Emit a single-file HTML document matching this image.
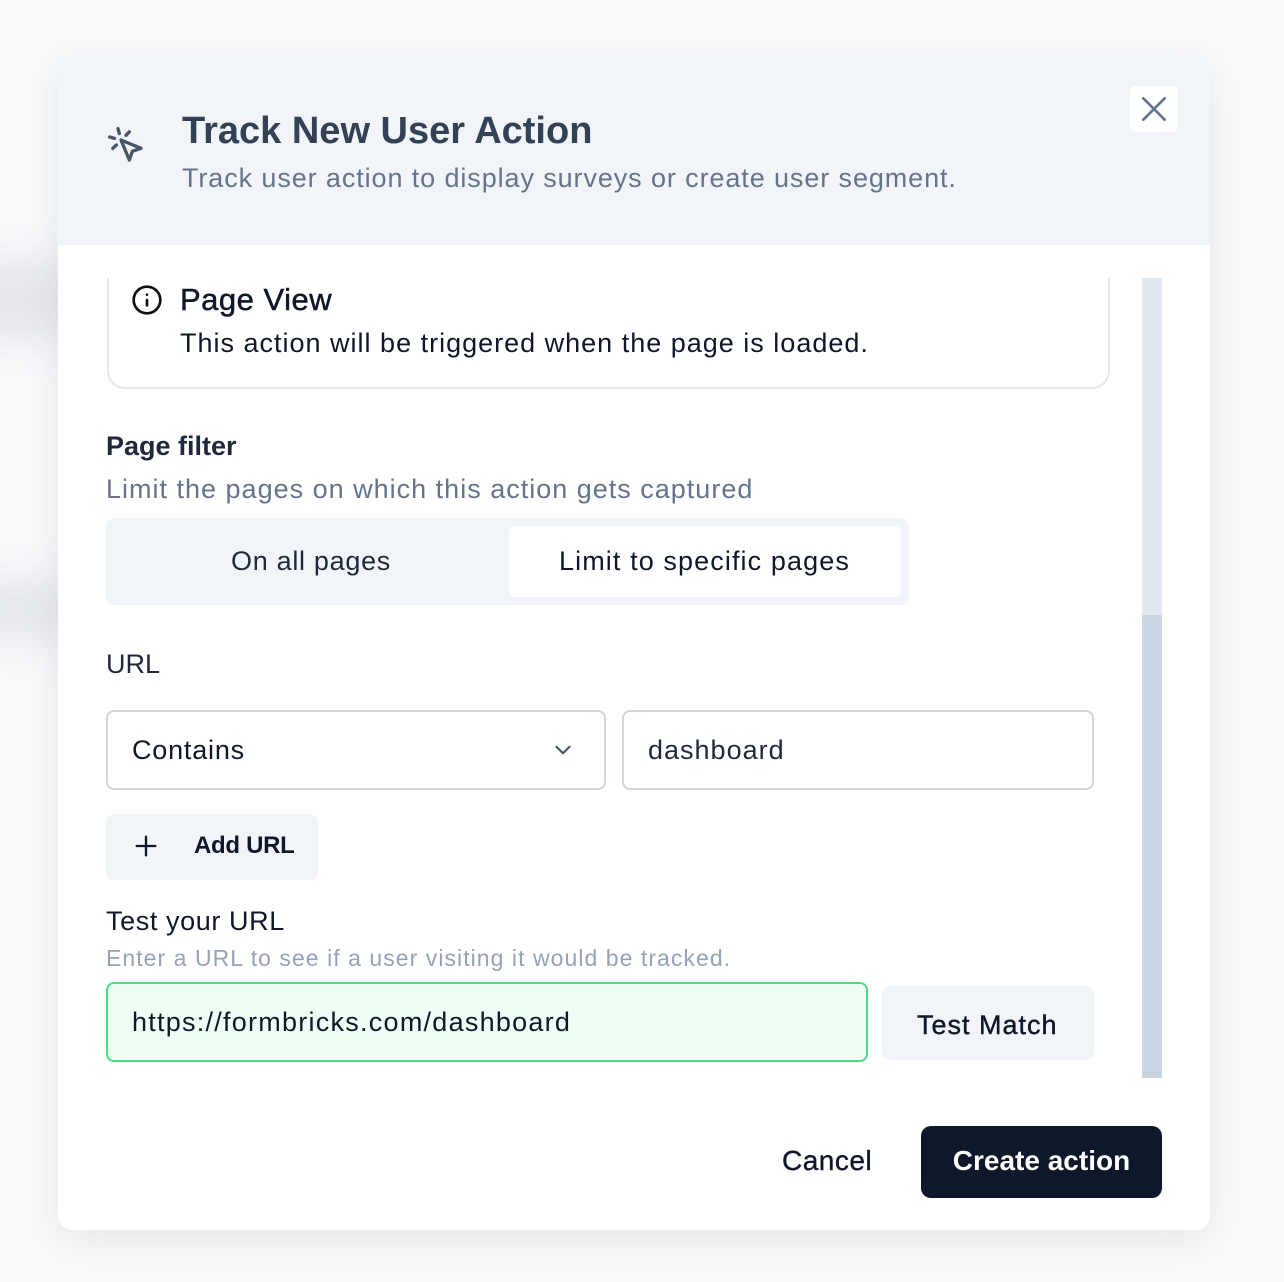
<!DOCTYPE html>
<html><head><style>
*{box-sizing:border-box;margin:0;padding:0}
body{width:1284px;height:1282px;background:#f8f9fb;font-family:"Liberation Sans",sans-serif;position:relative;overflow:hidden}
.blur{position:absolute;left:-40px;width:120px;background:#e5e7eb;filter:blur(20px)}
.modal{position:absolute;left:58px;top:55px;width:1152px;height:1175px;background:#fff;border-radius:14px;box-shadow:0 10px 40px rgba(0,0,0,.08);overflow:hidden}
.hdr{position:absolute;left:0;top:0;width:100%;height:190px;background:#f1f5f9}
.abs{position:absolute;white-space:nowrap}
</style></head><body>
<div class="blur" style="top:260px;height:80px"></div>
<div class="blur" style="top:580px;height:60px"></div>
<div class="modal">
 <div class="hdr"></div>
 <svg class="abs" style="left:48px;top:70px" width="40" height="40" viewBox="0 0 24 24" fill="none" stroke="#475569" stroke-width="2" stroke-linecap="round" stroke-linejoin="round"><path d="M9 9l5 12 1.8-5.2L21 14z"/><path d="M7.2 2.2L8 5.1M5.1 8L2.2 7.2M14 4.1L12 6.2M6.2 12l-2.1 2"/></svg>
 <div class="abs" style="left:124px;top:55px;font-size:38px;font-weight:600;color:#334155">Track New User Action</div>
 <div class="abs" style="left:124px;top:108px;font-size:27px;color:#64748b;letter-spacing:0.9px">Track user action to display surveys or create user segment.</div>
 <div class="abs" style="left:1072px;top:31px;width:48px;height:46px;background:#fff;border-radius:6px"></div>
 <svg class="abs" style="left:1080px;top:38px" width="32" height="32" viewBox="0 0 24 24" stroke="#64748b" stroke-width="2" stroke-linecap="round"><path d="M4 4l16 16M20 4L4 20"/></svg>

 <div class="abs" style="left:49px;top:223px;width:1003px;height:111px;border:2px solid #e5e7eb;border-top:none;border-radius:0 0 18px 18px"></div>
 <svg class="abs" style="left:73px;top:229px" width="32" height="32" viewBox="0 0 24 24" fill="none" stroke="#111" stroke-width="2" stroke-linecap="round"><circle cx="12" cy="12" r="10"/><path d="M12 16v-4M12 8h.01"/></svg>
 <div class="abs" style="left:122px;top:227px;font-size:31px;color:#0f172a;letter-spacing:0.5px;-webkit-text-stroke:0.5px #0f172a">Page View</div>
 <div class="abs" style="left:122px;top:273px;font-size:27px;color:#0f172a;letter-spacing:1px">This action will be triggered when the page is loaded.</div>

 <div class="abs" style="left:48px;top:376px;font-size:27px;font-weight:600;color:#1e293b">Page filter</div>
 <div class="abs" style="left:48px;top:419px;font-size:27px;color:#64748b;letter-spacing:1px">Limit the pages on which this action gets captured</div>
 <div class="abs" style="left:48px;top:463px;width:803px;height:87px;background:#f1f5f9;border-radius:8px"></div>
 <div class="abs" style="left:173px;top:491px;font-size:27px;color:#1e293b;letter-spacing:0.7px">On all pages</div>
 <div class="abs" style="left:451px;top:471px;width:392px;height:71px;background:#fff;border-radius:6px"></div>
 <div class="abs" style="left:501px;top:491px;font-size:27px;color:#0f172a;letter-spacing:1.1px">Limit to specific pages</div>

 <div class="abs" style="left:48px;top:594px;font-size:27px;color:#1e293b">URL</div>
 <div class="abs" style="left:48px;top:655px;width:500px;height:80px;border:2px solid #d1d5db;border-radius:8px"></div>
 <div class="abs" style="left:74px;top:680px;font-size:27px;color:#0f172a;letter-spacing:0.8px">Contains</div>
 <svg class="abs" style="left:492px;top:682px" width="26" height="26" viewBox="0 0 24 24" fill="none" stroke="#475569" stroke-width="2" stroke-linecap="round" stroke-linejoin="round"><path d="M6 9l6 6 6-6"/></svg>
 <div class="abs" style="left:564px;top:655px;width:472px;height:80px;border:2px solid #d1d5db;border-radius:8px"></div>
 <div class="abs" style="left:590px;top:680px;font-size:27px;color:#1e293b;letter-spacing:1px">dashboard</div>

 <div class="abs" style="left:48px;top:759px;width:212px;height:66px;background:#f1f5f9;border-radius:8px"></div>
 <svg class="abs" style="left:74px;top:777px" width="28" height="28" viewBox="0 0 24 24" stroke="#0f172a" stroke-width="2" stroke-linecap="round"><path d="M12 4v16M4 12h16"/></svg>
 <div class="abs" style="left:136px;top:777px;font-size:24px;font-weight:600;color:#0f172a;letter-spacing:-0.3px">Add URL</div>

 <div class="abs" style="left:48px;top:851px;font-size:27px;color:#0f172a;letter-spacing:0.6px">Test your URL</div>
 <div class="abs" style="left:48px;top:890px;font-size:23px;color:#94a3b8;letter-spacing:1.05px">Enter a URL to see if a user visiting it would be tracked.</div>
 <div class="abs" style="left:48px;top:927px;width:762px;height:80px;border:2px solid #4ade80;background:#f0fdf4;border-radius:8px"></div>
 <div class="abs" style="left:74px;top:952px;font-size:27px;color:#0f172a;letter-spacing:1.25px">https://formbricks.com/dashboard</div>
 <div class="abs" style="left:824px;top:931px;width:212px;height:74px;background:#f1f5f9;border-radius:8px"></div>
 <div class="abs" style="left:859px;top:955px;font-size:27px;color:#0f172a;letter-spacing:1px;-webkit-text-stroke:0.4px #0f172a">Test Match</div>

 <div class="abs" style="left:1084px;top:223px;width:20px;height:337px;background:#e2e8f0"></div>
 <div class="abs" style="left:1084px;top:560px;width:20px;height:463px;background:#cbd5e1"></div>

 <div class="abs" style="left:724px;top:1090px;font-size:28px;color:#0f172a;letter-spacing:0.5px;-webkit-text-stroke:0.4px #0f172a">Cancel</div>
 <div class="abs" style="left:863px;top:1071px;width:241px;height:72px;background:#0f172a;border-radius:10px"></div>
 <div class="abs" style="left:863px;top:1090px;width:241px;text-align:center;font-size:28px;font-weight:600;color:#fff">Create action</div>
</div>
</body></html>
